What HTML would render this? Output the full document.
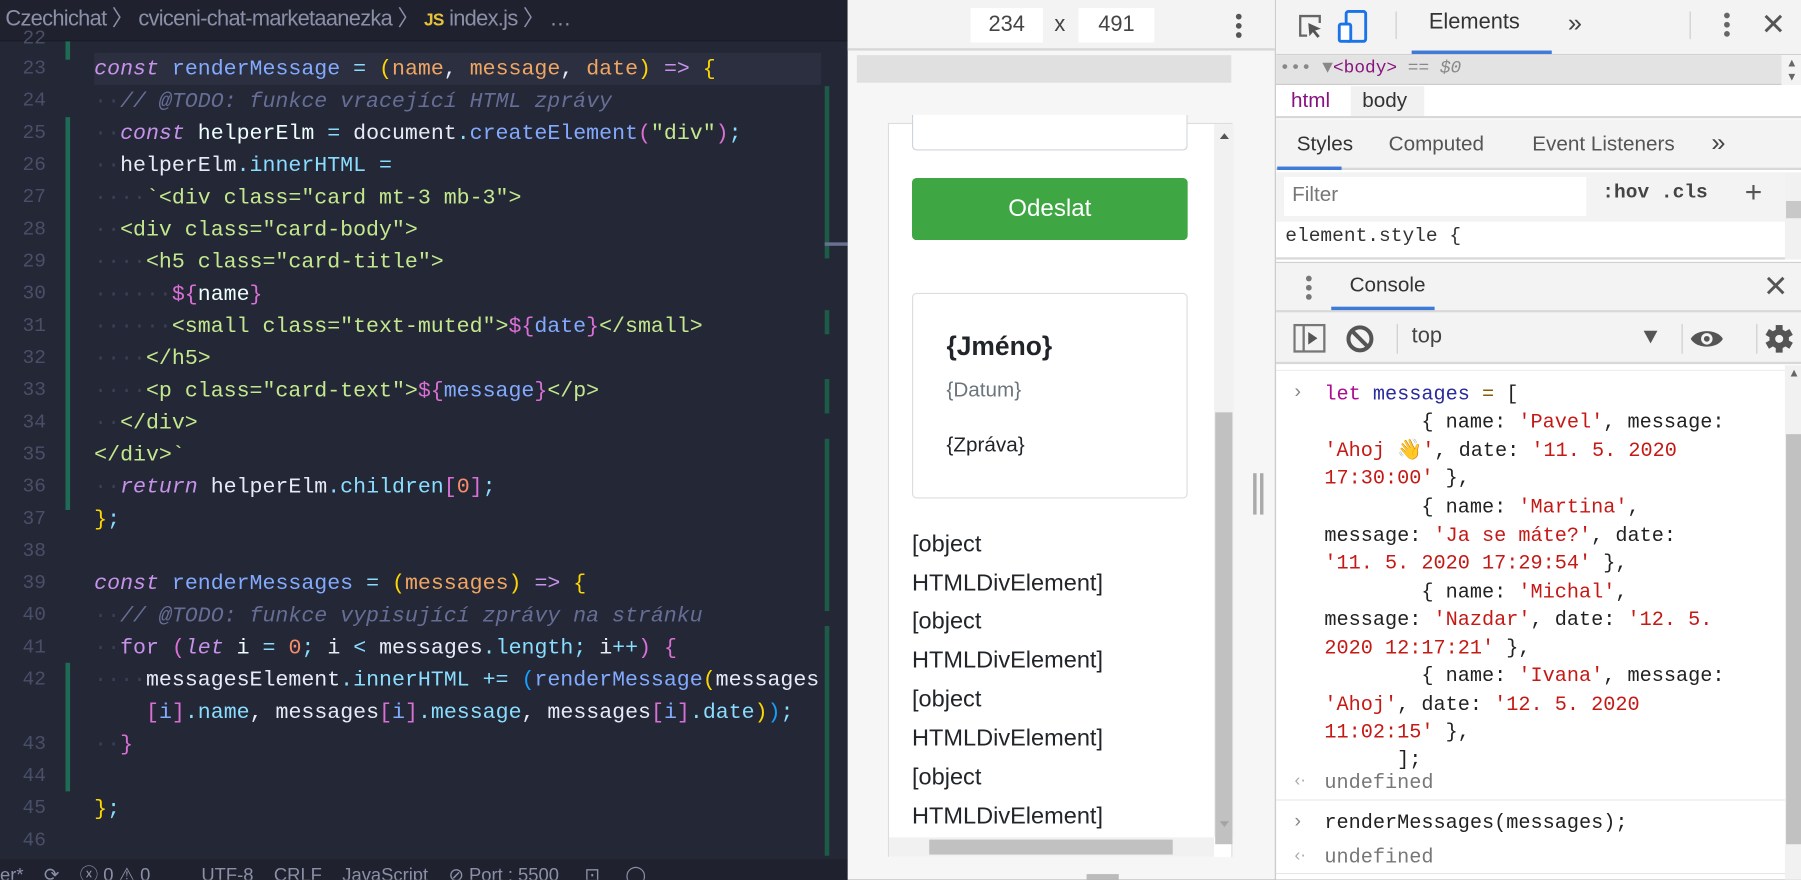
<!DOCTYPE html>
<html><head><meta charset="utf-8"><style>
*{margin:0;padding:0;box-sizing:border-box}
html,body{width:1801px;height:879px;overflow:hidden;background:#242736}
#r{position:absolute;left:0;top:0;width:1568px;height:766px;transform:scale(1.14860);transform-origin:0 0;font-family:"Liberation Sans",sans-serif}
.a{position:absolute}
.ed{left:0;top:0;width:738px;height:766px;background:#242736;overflow:hidden}
.bc{left:0;top:0;width:738px;height:36px;background:#1f222e;color:#8b90a8;font-size:19px;line-height:34px;white-space:nowrap;letter-spacing:-0.6px;border-bottom:1px solid #1a1c26}
.ln{position:absolute;left:0;width:40px;text-align:right;color:#4a4f68;font-family:"Liberation Mono",monospace;font-size:17px;margin-top:3px}
.cl{position:absolute;left:82px;font-family:"Liberation Mono",monospace;font-size:18.8px;white-space:pre;color:#e6ebf5;height:28px;line-height:28px}
.k{color:#c792ea;font-style:italic}.f{color:#82aaff}.p{color:#f0a662}.s{color:#c3e88d}.c{color:#676e95;font-style:italic}.o{color:#89ddff}.y{color:#ffd700}.m{color:#da70d6}.b{color:#179fff}.n{color:#f78c6c}.w{color:#3a3f55}.t{color:#a7e36f}
.gb{position:absolute;background:#1f6b55;width:4px;left:57px}
.gr{position:absolute;background:#1c5b48;width:4px;left:718px}
.sb{left:0;top:748px;width:738px;height:18px;background:#1f222e;color:#8b90a8;font-size:16px;line-height:30px;white-space:pre;overflow:hidden}
.mid{left:738px;top:0;width:372px;height:766px;background:#f6f6f6}
.dt{left:1110px;top:0;width:458px;height:766px;background:#fff;border-left:1px solid #ccc}
.hd{position:absolute;left:0;width:458px;background:#f3f3f3;border-bottom:1px solid #d0d0d0}
.mono{font-family:"Liberation Mono",monospace}
.co{position:absolute;left:42px;font-family:"Liberation Mono",monospace;font-size:17.6px;white-space:pre;color:#222;line-height:24px}
.st{color:#c41a16}
.obj{position:absolute;left:794px;font-size:20.5px;color:#212529}
</style></head><body><div id="r">
<div class="a ed">
 <div class="a bc">&nbsp;Czechichat 〉 cviceni-chat-marketaanezka 〉 <b style="color:#e5c33b;font-size:15px">JS</b> index.js 〉 …</div>
 <div class="a" style="left:82px;top:46px;width:633px;height:28px;background:#2b2f3f"></div>
 <div class="gb" style="top:36px;height:16px"></div>
 <div class="gb" style="top:102px;height:342px"></div>
 <div class="gb" style="top:577px;height:112px"></div>
 <div class="gr" style="top:75px;height:150px"></div>
 <div class="gr" style="top:270px;height:21px"></div>
 <div class="gr" style="top:330px;height:30px"></div>
 <div class="gr" style="top:382px;height:150px"></div>
 <div class="gr" style="top:545px;height:200px"></div>
 <div class="a" style="left:718px;top:211px;width:20px;height:3px;background:#6a7090"></div>
 <div class="ln" style="top:22px">22</div>
 <div class="ln" style="top:48px">23</div><div class="cl" style="top:46px"><span class="k">const</span> <span class="f">renderMessage</span> <span class="o">=</span> <span class="y">(</span><span class="p">name</span>, <span class="p">message</span>, <span class="p">date</span><span class="y">)</span> <span class="k" style="font-style:normal">=&gt;</span> <span class="y">{</span></div>
 <div class="ln" style="top:76px">24</div><div class="cl" style="top:74px"><span class="w">··</span><span class="c">// @TODO: funkce vracející HTML zprávy</span></div>
 <div class="ln" style="top:104px">25</div><div class="cl" style="top:102px"><span class="w">··</span><span class="k">const</span> <span style="color:#eeffff">helperElm</span> <span class="o">=</span> document<span class="o">.</span><span class="f">createElement</span><span class="m">(</span><span class="s">"div"</span><span class="m">)</span><span class="o">;</span></div>
 <div class="ln" style="top:132px">26</div><div class="cl" style="top:130px"><span class="w">··</span>helperElm<span class="o">.</span><span class="f" style="color:#89ddff">innerHTML</span> <span class="o">=</span></div>
 <div class="ln" style="top:160px">27</div><div class="cl" style="top:158px"><span class="w">····</span><span class="s">`&lt;div class="card mt-3 mb-3"&gt;</span></div>
 <div class="ln" style="top:188px">28</div><div class="cl" style="top:186px"><span class="w">··</span><span class="s">&lt;div class="card-body"&gt;</span></div>
 <div class="ln" style="top:216px">29</div><div class="cl" style="top:214px"><span class="w">····</span><span class="s">&lt;h5 class="card-title"&gt;</span></div>
 <div class="ln" style="top:244px">30</div><div class="cl" style="top:242px"><span class="w">······</span><span class="m">${</span><span style="color:#eeffff">name</span><span class="m">}</span></div>
 <div class="ln" style="top:272px">31</div><div class="cl" style="top:270px"><span class="w">······</span><span class="s">&lt;small class="text-muted"&gt;</span><span class="m">${</span><span class="f">date</span><span class="m">}</span><span class="s">&lt;/small&gt;</span></div>
 <div class="ln" style="top:300px">32</div><div class="cl" style="top:298px"><span class="w">····</span><span class="s">&lt;/h5&gt;</span></div>
 <div class="ln" style="top:328px">33</div><div class="cl" style="top:326px"><span class="w">····</span><span class="s">&lt;p class="card-text"&gt;</span><span class="m">${</span><span class="f">message</span><span class="m">}</span><span class="s">&lt;/p&gt;</span></div>
 <div class="ln" style="top:356px">34</div><div class="cl" style="top:354px"><span class="w">··</span><span class="s">&lt;/div&gt;</span></div>
 <div class="ln" style="top:384px">35</div><div class="cl" style="top:382px"><span class="s">&lt;/div&gt;`</span></div>
 <div class="ln" style="top:412px">36</div><div class="cl" style="top:410px"><span class="w">··</span><span class="k">return</span> helperElm<span class="o">.</span><span class="f" style="color:#89ddff">children</span><span class="m">[</span><span class="n">0</span><span class="m">]</span><span class="o">;</span></div>
 <div class="ln" style="top:440px">37</div><div class="cl" style="top:438px"><span class="y">}</span><span class="o">;</span></div>
 <div class="ln" style="top:468px">38</div>
 <div class="ln" style="top:496px">39</div><div class="cl" style="top:494px"><span class="k">const</span> <span class="f">renderMessages</span> <span class="o">=</span> <span class="y">(</span><span class="p">messages</span><span class="y">)</span> <span class="k" style="font-style:normal">=&gt;</span> <span class="y">{</span></div>
 <div class="ln" style="top:524px">40</div><div class="cl" style="top:522px"><span class="w">··</span><span class="c">// @TODO: funkce vypisující zprávy na stránku</span></div>
 <div class="ln" style="top:552px">41</div><div class="cl" style="top:550px"><span class="w">··</span><span class="k" style="font-style:normal">for</span> <span class="m">(</span><span class="k">let</span> <span class="f" style="color:#eeffff">i</span> <span class="o">=</span> <span class="n">0</span><span class="o">;</span> i <span class="o">&lt;</span> messages<span class="o">.</span><span class="f" style="color:#89ddff">length</span><span class="o">;</span> i<span class="o">++</span><span class="m">)</span> <span class="m">{</span></div>
 <div class="ln" style="top:580px">42</div><div class="cl" style="top:578px"><span class="w">····</span>messagesElement<span class="o">.</span><span class="f" style="color:#89ddff">innerHTML</span> <span class="o">+=</span> <span class="b">(</span><span class="f">renderMessage</span><span class="y">(</span>messages</div>
 <div class="cl" style="top:606px">    <span class="m">[</span><span class="f">i</span><span class="m">]</span><span class="o">.</span><span class="f" style="color:#89ddff">name</span>, messages<span class="m">[</span><span class="f">i</span><span class="m">]</span><span class="o">.</span><span class="f" style="color:#89ddff">message</span>, messages<span class="m">[</span><span class="f">i</span><span class="m">]</span><span class="o">.</span><span class="f" style="color:#89ddff">date</span><span class="y">)</span><span class="b">)</span><span class="o">;</span></div>
 <div class="ln" style="top:636px">43</div><div class="cl" style="top:634px"><span class="w">··</span><span class="m">}</span></div>
 <div class="ln" style="top:664px">44</div>
 <div class="ln" style="top:692px">45</div><div class="cl" style="top:690px"><span class="y">}</span><span class="o">;</span></div>
 <div class="ln" style="top:720px">46</div>
 <div class="a sb">er*    ⟳    ⓧ 0 ⚠ 0          UTF-8    CRLF    JavaScript    ⊘ Port : 5500     ⊡     ◯</div>
</div>
<div class="a mid">
 <div class="a" style="left:0;top:0;width:372px;height:44px;background:#f3f3f3;border-bottom:2px solid #d6d6d6"></div>
 <div class="a" style="left:107px;top:7px;width:63px;height:30px;background:#fff;color:#444;font-size:19px;text-align:center;line-height:30px">234</div>
 <div class="a" style="left:180px;top:7px;color:#444;font-size:19px;line-height:30px">x</div>
 <div class="a" style="left:201px;top:7px;width:66px;height:30px;background:#fff;color:#444;font-size:19px;text-align:center;line-height:30px">491</div>
 <div class="a" style="left:338px;top:12px;width:5px;height:5px;border-radius:50%;background:#555;box-shadow:0 8px 0 #555,0 16px 0 #555"></div>
 <div class="a" style="left:8px;top:48px;width:326px;height:24px;background:#e0e0e0"></div>
 <div class="a" style="left:35px;top:107px;width:300px;height:639px;background:#fff;border:1px solid #ddd;border-bottom:none"></div>
 <div class="a" style="left:56px;top:100px;width:240px;height:31px;border:1px solid #ced4da;border-top:none;border-radius:0 0 4px 4px;background:#fff"></div>
 <div class="a" style="left:56px;top:155px;width:240px;height:54px;background:#3ea643;border-radius:4px;color:#fff;font-size:21px;text-align:center;line-height:54px">Odeslat</div>
 <div class="a" style="left:56px;top:255px;width:240px;height:179px;border:1px solid #ddd;border-radius:4px"></div>
 <div class="a" style="left:86px;top:288px;font-size:23px;font-weight:bold;color:#212529">{Jméno}</div>
 <div class="a" style="left:86px;top:329px;font-size:18px;color:#6c757d">{Datum}</div>
 <div class="a" style="left:86px;top:377px;font-size:18px;color:#212529">{Zpráva}</div>
 <div class="a" style="left:319px;top:108px;width:17px;height:621px;background:#f1f1f1"></div>
 <div class="a" style="left:324px;top:116px;width:0;height:0;border-left:4px solid transparent;border-right:4px solid transparent;border-bottom:5px solid #555"></div>
 <div class="a" style="left:320px;top:359px;width:15px;height:376px;background:#c1c1c1"></div>
 <div class="a" style="left:324px;top:715px;width:0;height:0;border-left:4px solid transparent;border-right:4px solid transparent;border-top:5px solid #a3a3a3"></div>
 <div class="a" style="left:36px;top:729px;width:283px;height:17px;background:#f1f1f1"></div>
 <div class="a" style="left:71px;top:731px;width:212px;height:13px;background:#c1c1c1"></div>
 <div class="a" style="left:353px;top:412px;width:3px;height:36px;background:#aaa"></div>
 <div class="a" style="left:359px;top:412px;width:3px;height:36px;background:#aaa"></div>
 <div class="a" style="left:208px;top:761px;width:28px;height:5px;background:#bbb"></div>
</div>
<div class="obj" style="top:462px">[object</div>
<div class="obj" style="top:496px">HTMLDivElement]</div>
<div class="obj" style="top:529px">[object</div>
<div class="obj" style="top:563px">HTMLDivElement]</div>
<div class="obj" style="top:597px">[object</div>
<div class="obj" style="top:631px">HTMLDivElement]</div>
<div class="obj" style="top:665px">[object</div>
<div class="obj" style="top:699px">HTMLDivElement]</div>
<div class="a dt">
 <div class="hd" style="top:0;height:48px"></div>
 <svg class="a" style="left:17px;top:10px" width="26" height="26" viewBox="0 0 26 26"><path d="M10 21H4V4h17v6" fill="none" stroke="#666" stroke-width="2"/><path d="M11 10l11 5-5 1.5 4 5-2 1.5-4-5-3 3.5z" fill="#555"/></svg>
 <svg class="a" style="left:53px;top:8px" width="28" height="30" viewBox="0 0 28 30"><rect x="8" y="2" width="17" height="26" rx="2" fill="none" stroke="#1a73e8" stroke-width="2.5"/><rect x="2" y="13" width="10" height="15" rx="1.5" fill="#fff" stroke="#1a73e8" stroke-width="2.5"/></svg>
 <div class="a" style="left:104px;top:10px;width:1px;height:24px;background:#ccc"></div>
 <div class="a" style="left:133px;top:9px;font-size:19px;color:#333">Elements</div>
 <div class="a" style="left:118px;top:44px;width:122px;height:3px;background:#3f7ad8"></div>
 <div class="a" style="left:254px;top:7px;font-size:22px;color:#444">»</div>
 <div class="a" style="left:360px;top:10px;width:1px;height:24px;background:#ccc"></div>
 <div class="a" style="left:390px;top:11px;width:5px;height:5px;border-radius:50%;background:#666;box-shadow:0 8px 0 #666,0 16px 0 #666"></div>
 <div class="a" style="left:422px;top:6px;font-size:26px;color:#555">✕</div>
 <div class="a" style="left:0;top:48px;width:440px;height:26px;background:#e3e3e3;border-bottom:1px solid #ccc"></div>
 <div class="a mono" style="left:3px;top:50px;font-size:15.5px;color:#888;white-space:pre">••• ▼<span style="color:#881280">&lt;body&gt;</span> <i>== $0</i></div>
 <div class="a" style="left:440px;top:48px;width:18px;height:26px;background:#f3f3f3;color:#666;font-size:10px;text-align:center;line-height:12px;padding-top:2px">▲<br>▼</div>
 <div class="a" style="left:0;top:75px;width:458px;height:28px;background:#fff;border-bottom:2px solid #d8d8d8"></div>
 <div class="a" style="left:65px;top:75px;width:64px;height:26px;background:#f1f1f1"></div>
 <div class="a" style="left:13px;top:77px;font-size:18px;color:#881280">html</div>
 <div class="a" style="left:75px;top:77px;font-size:18px;color:#333">body</div>
 <div class="hd" style="top:104px;height:44px;border-bottom:2px solid #d8d8d8"></div>
 <div class="a" style="left:18px;top:115px;font-size:18px;color:#333">Styles</div>
 <div class="a" style="left:98px;top:115px;font-size:18px;color:#555">Computed</div>
 <div class="a" style="left:223px;top:115px;font-size:18px;color:#555">Event Listeners</div>
 <div class="a" style="left:379px;top:111px;font-size:22px;color:#444">»</div>
 <div class="a" style="left:1px;top:145px;width:56px;height:3px;background:#3f7ad8"></div>
 <div class="a" style="left:0;top:150px;width:443px;height:76px;background:#f3f3f3"></div>
 <div class="a" style="left:7px;top:154px;width:263px;height:34px;background:#fff"></div>
 <div class="a" style="left:14px;top:159px;font-size:18px;color:#777">Filter</div>
 <div class="a mono" style="left:284px;top:159px;font-size:17px;color:#444;font-weight:bold;white-space:pre">:hov .cls</div>
 <div class="a" style="left:408px;top:152px;font-size:26px;color:#555">+</div>
 <div class="a" style="left:0;top:193px;width:443px;height:33px;background:#fff;border-bottom:2px solid #d8d8d8"></div>
 <div class="a mono" style="left:8px;top:197px;font-size:17px;color:#333">element.style {</div>
 <div class="a" style="left:443px;top:150px;width:15px;height:76px;background:#f1f1f1"></div>
 <div class="a" style="left:444px;top:175px;width:13px;height:15px;background:#c8c8c8"></div>
 <div class="hd" style="top:228px;height:44px;border-top:1px solid #d0d0d0;border-bottom:2px solid #d8d8d8"></div>
 <div class="a" style="left:26px;top:240px;width:5px;height:5px;border-radius:50%;background:#777;box-shadow:0 8px 0 #777,0 16px 0 #777"></div>
 <div class="a" style="left:64px;top:238px;font-size:18px;color:#333">Console</div>
 <div class="a" style="left:48px;top:267px;width:90px;height:3px;background:#3f7ad8"></div>
 <div class="a" style="left:424px;top:234px;font-size:26px;color:#555">✕</div>
 <div class="hd" style="top:272px;height:45px;border-bottom:2px solid #d8d8d8"></div>
 <svg class="a" style="left:15px;top:282px" width="30" height="26" viewBox="0 0 30 26"><rect x="1" y="1" width="26" height="23" fill="none" stroke="#777" stroke-width="2"/><path d="M9 1v23" stroke="#777" stroke-width="2"/><path d="M13 7l8 5.5-8 5.5z" fill="#555"/></svg>
 <svg class="a" style="left:60px;top:282px" width="26" height="26" viewBox="0 0 26 26"><circle cx="13" cy="13" r="10" fill="none" stroke="#555" stroke-width="3.5"/><path d="M6 6l14 14" stroke="#555" stroke-width="3.5"/></svg>
 <div class="a" style="left:105px;top:282px;width:1px;height:26px;background:#ccc"></div>
 <div class="a" style="left:118px;top:282px;font-size:19px;color:#444">top</div>
 <div class="a" style="left:320px;top:288px;width:0;height:0;border-left:6px solid transparent;border-right:6px solid transparent;border-top:11px solid #555"></div>
 <div class="a" style="left:353px;top:282px;width:1px;height:26px;background:#ccc"></div>
 <svg class="a" style="left:360px;top:283px" width="30" height="24" viewBox="0 0 30 24"><path d="M1 12C6 3 24 3 29 12C24 21 6 21 1 12z" fill="#555"/><circle cx="15" cy="12" r="5" fill="#f3f3f3"/><circle cx="15" cy="12" r="2.5" fill="#555"/></svg>
 <div class="a" style="left:418px;top:282px;width:1px;height:26px;background:#ccc"></div>
 <svg class="a" style="left:425px;top:281px" width="26" height="28" viewBox="0 0 26 28"><g transform="translate(13 14)" fill="#555"><circle r="8.5"/><rect x="-3" y="-12" width="6" height="24"/><rect x="-3" y="-12" width="6" height="24" transform="rotate(60)"/><rect x="-3" y="-12" width="6" height="24" transform="rotate(120)"/><circle r="3.5" fill="#f3f3f3"/></g></svg>
 <div class="a" style="left:0;top:322px;width:443px;height:1px;background:#eee"></div>
 <div class="a" style="left:443px;top:318px;width:15px;height:448px;background:#f1f1f1"></div>
 <div class="a" style="left:444px;top:378px;width:13px;height:357px;background:#c1c1c1"></div>
 <div class="a" style="left:446px;top:320px;font-size:10px;color:#666">▲</div>
 <div class="a" style="left:16px;top:331px;color:#888;font-size:17px">›</div>
 <div class="co" style="top:332px"><span style="color:#aa0d91">let</span> <span style="color:#2b2ba0">messages</span> <span style="color:#8a5a00">=</span> [</div>
 <div class="co" style="top:356px">        { name: <span class="st">'Pavel'</span>, message:</div>
 <div class="co" style="top:381px"><span class="st">'Ahoj 👋'</span>, date: <span class="st">'11. 5. 2020</span></div>
 <div class="co" style="top:405px"><span class="st">17:30:00'</span> },</div>
 <div class="co" style="top:430px">        { name: <span class="st">'Martina'</span>,</div>
 <div class="co" style="top:455px">message: <span class="st">'Ja se máte?'</span>, date:</div>
 <div class="co" style="top:479px"><span class="st">'11. 5. 2020 17:29:54'</span> },</div>
 <div class="co" style="top:504px">        { name: <span class="st">'Michal'</span>,</div>
 <div class="co" style="top:528px">message: <span class="st">'Nazdar'</span>, date: <span class="st">'12. 5.</span></div>
 <div class="co" style="top:553px"><span class="st">2020 12:17:21'</span> },</div>
 <div class="co" style="top:577px">        { name: <span class="st">'Ivana'</span>, message:</div>
 <div class="co" style="top:602px"><span class="st">'Ahoj'</span>, date: <span class="st">'12. 5. 2020</span></div>
 <div class="co" style="top:626px"><span class="st">11:02:15'</span> },</div>
 <div class="co" style="top:650px">      ];</div>
 <div class="a" style="left:16px;top:671px;color:#aaa;font-size:15px">‹·</div>
 <div class="co" style="top:670px;color:#777">undefined</div>
 <div class="a" style="left:0;top:696px;width:443px;height:1px;background:#e8e8e8"></div>
 <div class="a" style="left:16px;top:705px;color:#888;font-size:17px">›</div>
 <div class="co" style="top:705px">renderMessages(messages);</div>
 <div class="a" style="left:16px;top:736px;color:#aaa;font-size:15px">‹·</div>
 <div class="co" style="top:735px;color:#777">undefined</div>
 <div class="a" style="left:0;top:760px;width:443px;height:1px;background:#e8e8e8"></div>
</div>
</div></body></html>
